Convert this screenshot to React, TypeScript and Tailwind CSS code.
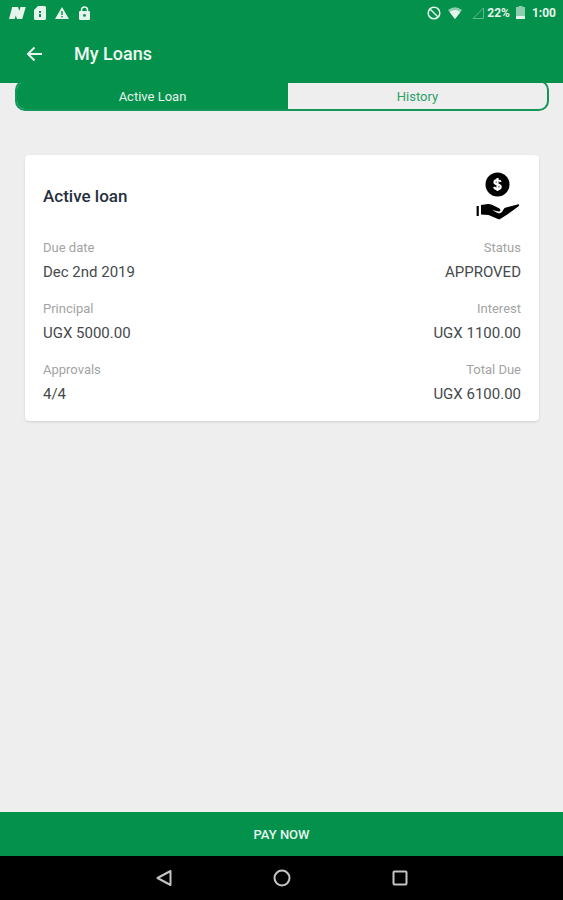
import React, { useState } from "react";

interface FieldProps {
  label: string;
  value: string;
  alignRight?: boolean;
}

const loanFields: FieldProps[] = [
  { label: "Due date", value: "Dec 2nd 2019" },
  { label: "Status", value: "APPROVED", alignRight: true },
  { label: "Principal", value: "UGX 5000.00" },
  { label: "Interest", value: "UGX 1100.00", alignRight: true },
  { label: "Approvals", value: "4/4" },
  { label: "Total Due", value: "UGX 6100.00", alignRight: true },
];

const Field: React.FC<FieldProps> = ({ label, value, alignRight }) => (
  <div className={alignRight ? "text-right" : "text-left"}>
    <dt className="text-[13px] leading-5 text-[#a3a3a3]">{label}</dt>
    <dd className="mt-[2px] text-[15px] leading-6 text-[#454a4c]">{value}</dd>
  </div>
);

const StatusBar = () => (
  <div className="flex h-[25px] items-center justify-between pl-[9px] pr-[7px] text-[#e6f5ec]">
    <div className="flex items-center gap-2">
      <svg width="17" height="12" viewBox="0 0 17 12" fill="currentColor">
        <path d="M3.200 0h5.800l1.300 4L11.500 0h5.300l-3.600 12H8L6.800 8.500 5.600 12H0z" />
      </svg>
      <svg width="12" height="14" viewBox="0 0 12 14" fill="currentColor">
        <path
          fillRule="evenodd"
          d="M4 0h6.5Q12 0 12 1.500V12.500Q12 14 10.500 14h-9Q0 14 0 12.500V4zM5 5v2h2V5zm0 3v3h2V8z"
        />
      </svg>
      <svg className="ml-[1px]" width="14" height="12" viewBox="0 0 14 12" fill="currentColor">
        <path fillRule="evenodd" d="M7 0l7 12H0zM6.300 4v4h1.400V4zm0 5v1.400h1.400V9z" />
      </svg>
      <svg className="ml-[2px]" width="11" height="14" viewBox="0 0 11 14">
        <path d="M2.500 6V4a3 3 0 0 1 6 0v2" fill="none" stroke="currentColor" strokeWidth="1.500" />
        <path
          fill="currentColor"
          fillRule="evenodd"
          d="M1.200 5h8.600Q11 5 11 6.200v6.600Q11 14 9.800 14H1.200Q0 14 0 12.800V6.200Q0 5 1.200 5zM5.500 8a1.400 1.400 0 1 0 0 2.800 1.400 1.400 0 0 0 0-2.800z"
        />
      </svg>
    </div>
    <div className="flex items-center text-[12px] font-bold leading-4">
      <svg width="14" height="14" viewBox="0 0 14 14" fill="none" stroke="currentColor" strokeWidth="1.500">
        <circle cx="7" cy="7" r="5.800" />
        <path d="M3 3l8 8" />
      </svg>
      <svg className="ml-[7px]" width="14" height="12" viewBox="0 0 14 12" fill="currentColor">
        <path d="M0 3Q7-2.600 14 3L7 12z" opacity="0.600" />
        <path d="M1.600 5Q7 1 12.400 5L7 12z" />
      </svg>
      <svg
        className="ml-[10px]"
        width="12"
        height="12"
        viewBox="0 0 12 12"
        fill="none"
        stroke="currentColor"
        opacity="0.400"
      >
        <path d="M11.500 1v10.500H1z" />
      </svg>
      <span className="ml-[3px]">22%</span>
      <svg className="ml-[6px]" width="9" height="13" viewBox="0 0 9 13" fill="currentColor">
        <path d="M2.500 0h4v1H9V13H0V1h2.500z" opacity="0.600" />
        <path d="M0 10h9v3H0z" />
      </svg>
      <span className="ml-[7px]">1:00</span>
    </div>
  </div>
);

const LoanIcon = () => (
  <svg width="45" height="48" viewBox="0 0 45 48" fill="#000">
    <circle cx="21.500" cy="12.500" r="12" />
    <path
      d="M24.700 9.800C24.200 8.400 23 8 21.500 8c-1.800 0-3 .8-3 2.200 0 3.200 6.200 1.400 6.200 4.600 0 1.500-1.300 2.300-3.200 2.300-1.800 0-3-.7-3.400-2.200M21.500 6v13"
      fill="none"
      stroke="#fff"
      strokeWidth="2.200"
    />
    <path d="M.6 34h2.200v10H.6z" />
    <path d="M5 33L12 32Q15 31.800 17.500 33.500L23 36.300Q25.400 38 23.800 39.300Q22 40.200 16.400 37.800Q20.800 41.600 24 41.200Q26.200 40.600 27.600 37.200Q28.400 35.800 30 35.500L42.500 32.300Q43.800 32.600 42.600 34.200L32 42L24.600 46.700Q22.800 47.800 20.800 46.600L12.500 43L5 42.600z" />
  </svg>
);

const App: React.FC = () => {
  const [tab, setTab] = useState("active");

  return (
    <div className="flex min-h-screen flex-col bg-[#eeeeee] font-[Roboto,'Liberation_Sans',sans-serif]">
      <header className="relative z-10 bg-[#04914c]">
        <StatusBar />
        <div className="flex h-[58px] items-center pl-[26px]">
          <button type="button" aria-label="Back" className="text-[#e6f5ec]">
            <svg width="17" height="16" viewBox="0 0 17 16" fill="none" stroke="currentColor" strokeWidth="2">
              <path d="M16 8H2.500M8.500 1.500L2 8l6.500 6.500" />
            </svg>
          </button>
          <h1 className="ml-[31px] text-[18px] font-medium leading-6 text-[#eefaf3]">My Loans</h1>
        </div>
      </header>

      {/* the top edge tucks under the header */}
      <div className="ml-[15px] mr-[14px] -mt-[3px] flex h-[31px] overflow-hidden rounded-[10px] border-2 border-[#149559] text-[13px] leading-4">
        <button
          type="button"
          aria-pressed={tab === "active"}
          onClick={() => setTab("active")}
          className="w-[271px] max-w-[51.2%] bg-[#04914c] pt-[2px] text-[#e6f5ec]"
        >
          Active Loan
        </button>
        <button
          type="button"
          aria-pressed={tab === "history"}
          onClick={() => setTab("history")}
          className="flex-1 pt-[2px] text-[#2f9f6b]"
        >
          History
        </button>
      </div>

      <main className="flex-1 pb-6 pl-[25px] pr-6 pt-11">
        <section className="rounded bg-white px-[18px] pb-[15px] pt-[17px] shadow-sm">
          <div className="flex items-center justify-between">
            <h2 className="text-[17px] font-medium leading-6 text-[#263040]">Active loan</h2>
            <LoanIcon />
          </div>
          <dl className="mt-[18px] grid grid-cols-2 gap-y-[15px]">
            {loanFields.map((field) => (
              <Field key={field.label} {...field} />
            ))}
          </dl>
        </section>
      </main>

      <button type="button" className="h-11 bg-[#04914c] pt-[2px] text-[13px] font-medium leading-4 text-[#e6f5ec]">
        PAY NOW
      </button>

      <nav className="flex h-11 items-center justify-center gap-[100px] bg-black text-[#c4c4c4]">
        <button type="button" aria-label="Back">
          <svg width="18" height="18" viewBox="0 0 18 18" fill="none" stroke="currentColor" strokeWidth="2">
            <path d="M15.500 2v14L2.500 9z" strokeLinejoin="round" />
          </svg>
        </button>
        <button type="button" aria-label="Home">
          <svg width="18" height="18" viewBox="0 0 18 18" fill="none" stroke="currentColor" strokeWidth="2">
            <circle cx="9" cy="9" r="7.500" />
          </svg>
        </button>
        <button type="button" aria-label="Recent apps">
          <svg width="18" height="18" viewBox="0 0 18 18" fill="none" stroke="currentColor" strokeWidth="2">
            <rect x="2.500" y="2.500" width="13" height="13" rx="1" />
          </svg>
        </button>
      </nav>
    </div>
  );
};

export default App;
